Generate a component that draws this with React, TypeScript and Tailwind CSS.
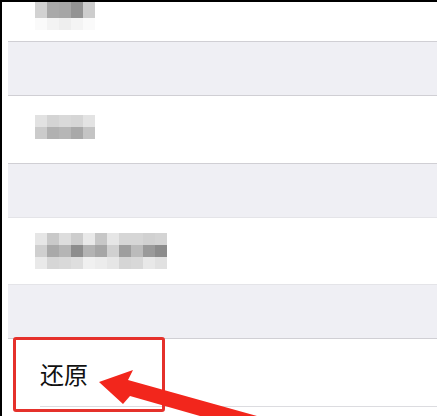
// iOS settings list with blurred rows and a red callout on "还原"
const M1 = [
  ["bg-[#d2d2d2]", "bg-[#a9a9a9]", "bg-[#a6a6a6]", "bg-[#939393]", "bg-[#cdcdcd]"],
  ["bg-[#fafafa]", "bg-[#f3f3f3]", "bg-[#eeeeee]", "bg-[#f4f4f4]", "bg-[#fafafa]"],
];

const M2 = [
  ["bg-[#e2e2e2]", "bg-[#d4d4d4]", "bg-[#d9d9d9]", "bg-[#d6d6d6]", "bg-[#e3e3e3]"],
  ["bg-[#cbcbcb]", "bg-[#b1b1b1]", "bg-[#b6b6b6]", "bg-[#a9a9a9]", "bg-[#c4c4c4]"],
];

const M3 = [
  ["bg-[#e6e6e6]", "bg-[#c9c9c9]", "bg-[#dddddd]", "bg-[#cdcdcd]", "bg-[#e9e9e9]", "bg-[#c7c7c7]", "bg-[#e6e6e6]", "bg-[#d6d6d6]", "bg-[#d6d6d6]", "bg-[#d1d1d1]", "bg-[#d4d4d4]"],
  ["bg-[#cfcfcf]", "bg-[#a9a9a9]", "bg-[#b5b5b5]", "bg-[#8d8d8d]", "bg-[#b3b3b3]", "bg-[#a6a6a6]", "bg-[#d0d0d0]", "bg-[#9e9e9e]", "bg-[#bbbbbb]", "bg-[#9a9a9a]", "bg-[#8c8c8c]"],
  ["bg-[#e9e9e9]", "bg-[#d6d6d6]", "bg-[#d9d9d9]", "bg-[#dedede]", "bg-[#f0f0f0]", "bg-[#ececec]", "bg-[#e6e6e6]", "bg-[#d5d5d5]", "bg-[#d8d8d8]", "bg-[#e8e8e8]", "bg-[#e1e1e1]"],
];

function Mosaic({ cells, cellH = "h-[12px]" }: { cells: string[][]; cellH?: string }) {
  return (
    <div className="flex flex-col blur-[0.6px]">
      {cells.map((row, i) => (
        <div key={i} className="flex">
          {row.map((c, j) => (
            <div key={j} className={`w-[12px] ${i === 0 ? cellH : "h-[12px]"} ${c}`} />
          ))}
        </div>
      ))}
    </div>
  );
}

function Gap() {
  return <div className="h-[53px] bg-[#efeff4]" />;
}

export default function App() {
  return (
    <div
      className="relative h-[416px] w-[437px] overflow-hidden bg-black pl-[2px] pt-[2px]"
      style={{ fontFamily: '"Noto Sans CJK SC", "Noto Sans", sans-serif' }}
    >
      <div className="flex h-full flex-col bg-white pl-[6px]">
        <div className="h-[39px] pl-[27px]">
          <Mosaic cells={M1} cellH="h-[16px]" />
        </div>
        <div className="h-px bg-[#d0cfd4]" />
        <Gap />
        <div className="h-px bg-[#d0cfd4]" />
        <div className="h-[67px] pl-[27px] pt-[19px]">
          <Mosaic cells={M2} />
        </div>
        <div className="h-px bg-[#d0cfd4]" />
        <Gap />
        <div className="h-px bg-[#e4e4e8]" />
        <div className="h-[66px] pl-[27px] pt-[15px]">
          <Mosaic cells={M3} />
        </div>
        <div className="h-px bg-[#e4e4e8]" />
        <Gap />
        <div className="h-px bg-[#d0cfd4]" />
        <div className="flex h-[67px] items-center pl-[32px] pt-[2px] text-[24px] leading-none text-[#111]">还原</div>
        <div className="ml-[32px] h-px bg-[#dcdce0]" />
        <div className="flex-1" />
      </div>

      {/* callout */}
      <div className="absolute left-[13px] top-[337px] h-[75px] w-[152px] rounded-[3px] border-[3px] border-[#e5312b]" />
      <svg className="absolute left-0 top-0" width="437" height="416" viewBox="0 0 437 416">
        <polygon
          points="99,382 133,370 128,380 257,416 200,416 130,396 123,404"
          fill="#f2261c"
        />
      </svg>
    </div>
  );
}
